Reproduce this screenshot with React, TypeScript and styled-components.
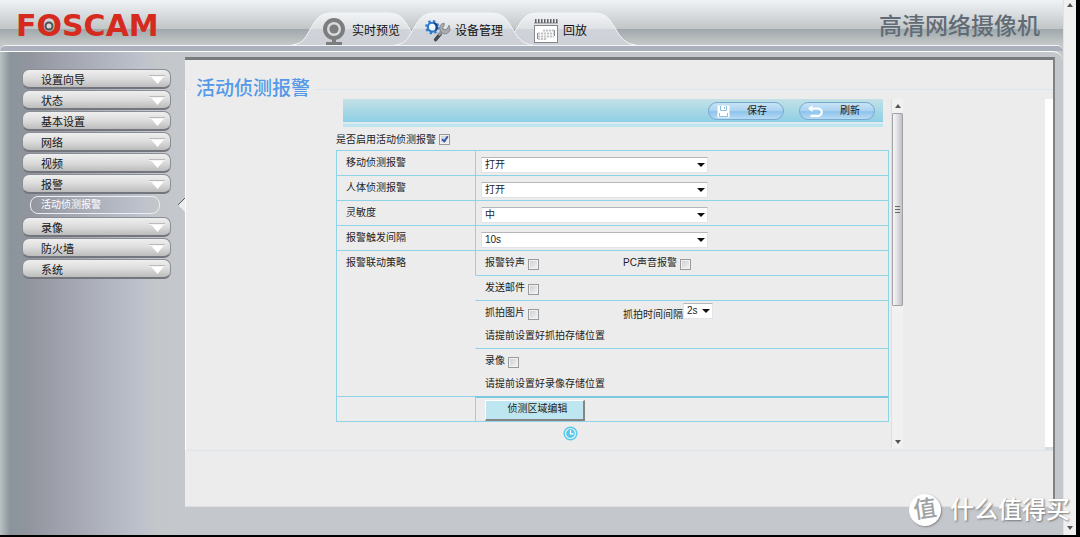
import React from "react";
import styled, { createGlobalStyle, css } from "styled-components";

const GlobalStyle = createGlobalStyle`
  *, *::before, *::after { box-sizing: border-box; }
  body {
    margin: 0;
    background: #000;
    color: #1c1c1c;
    font-family: "Liberation Sans", "Noto Sans CJK SC", sans-serif;
    font-size: 10px;
  }
  button, select, input { font-family: inherit; color: inherit; margin: 0; }
`;

const line = "#8fd3e8";

const Window = styled.div`
  position: relative;
  display: flex;
  min-height: 100vh;
  padding: 0 4px 2px 0;
`;

const Page = styled.div`
  flex: 1;
  min-width: 0;
  display: flex;
  flex-direction: column;
  background: #c5c8c8;
`;

const PageScroll = styled.div`
  width: 13px;
  display: flex;
  flex-direction: column;
  align-items: center;
  justify-content: space-between;
  padding: 3px 0 5px;
  background: #f0f0f0;
  border-left: 1px solid #e2e2e2;
`;

const Header = styled.header`
  height: 45px;
  display: flex;
  background: linear-gradient(#eff3f6 0, #d9dddf 14px, #c1c5c6 29px, #9fa8ac 29px, #c6c9c9 45px);
`;

const Logo = styled.a`
  width: 292px;
  padding-left: 16px;
  font-family: "DejaVu Sans", sans-serif;
  font-size: 30px;
  font-weight: 700;
  line-height: 52px;
  color: #d52b1e;
  text-decoration: none;
`;

const LensLetter = styled.span`
  position: relative;
  svg {
    position: absolute;
    left: 50%;
    top: 50%;
    transform: translate(-50%, -50%);
  }
`;

const Tabs = styled.nav`
  flex: 1;
  display: flex;
  align-items: flex-end;
`;

const Tab = styled.a<{ $front?: boolean; $short?: boolean }>`
  position: relative;
  z-index: ${(p) => (p.$front ? 2 : 1)};
  width: 138px;
  height: 33px;
  margin-right: -35px;
  padding: 4px 0 0 ${(p) => (p.$short ? 35 : 30)}px;
  display: flex;
  align-items: center;
  gap: 4px;
  color: #111;
  font-size: 12px;
  line-height: 16px;
  text-decoration: none;
`;

const TabShape = styled.svg`
  position: absolute;
  inset: 0;
  z-index: -1;
`;

const TabIcon = styled.span`
  display: flex;
  width: 26px;
`;

const Product = styled.div`
  padding-right: 23px;
  font-family: "Liberation Serif", "Noto Sans CJK SC", serif;
  font-size: 23px;
  font-weight: 500;
  line-height: 54px;
  color: #616b75;
`;

const Band = styled.div`
  height: 6px;
  background: #aab0bc;
  border-top: 1px solid #f2f4f6;
  border-radius: 10px 10px 0 0;
`;

const Body = styled.div`
  flex: 1;
  display: flex;
  padding: 5px 8px 28px 0;
  background: linear-gradient(90deg, #b9c2c3 0, #8b949b 10px, #8f959d 24px, #93959f 32px, #a3a6b0 70px, #b4b8c2 115px, #bec2cc 142px, #c3c7ca 156px, #c4c7cc 185px);
  border-top: 1px solid #fff;
  border-radius: 0 10px 0 0;
`;

const Side = styled.aside`
  position: relative;
  width: 185px;
  padding: 12px 14px 0 22px;
`;

const Menu = styled.nav`
  display: flex;
  flex-direction: column;
  gap: 1px;
`;

const MenuItem = styled.button`
  height: 20px;
  display: flex;
  align-items: center;
  justify-content: space-between;
  padding: 2px 4px 0 18px;
  border: 1px solid #8b8d94;
  border-bottom: 2px solid #74767e;
  border-radius: 7px;
  background: linear-gradient(#efefef, #dcdcdc 50%, #bcbcbc);
  font-size: 11px;
  line-height: 16px;
  color: #151515;
`;

const SubItem = styled.a`
  height: 18px;
  margin: 1px 11px 2px 8px;
  padding-left: 10px;
  border: 1px solid #eceef1;
  border-radius: 8px;
  font-size: 10px;
  line-height: 16px;
  color: #fff;
  text-decoration: none;
`;

const Notch = styled.svg`
  position: absolute;
  right: 0;
  top: 141px;
`;

const Panel = styled.main`
  flex: 1;
  min-width: 0;
  background: #ececec;
  border-top: 3px solid #777b7b;
  border-right: 2px solid #808284;
  border-bottom: 1px solid #dcdee0;
  padding-top: 19px;
`;

const Frame = styled.fieldset`
  min-width: 0;
  margin: 0;
  padding: 0;
  border: 1px solid #dde6ec;
  border-left-color: #fff;
  border-right: 0;
`;

const Title = styled.legend`
  margin-left: 5px;
  padding: 0 5px;
  font-family: "Liberation Serif", "Noto Sans CJK SC", serif;
  font-size: 19px;
  font-weight: 500;
  line-height: 20px;
  color: #5399e8;
`;

const FrameBody = styled.div`
  display: flex;
  height: 351px;
`;

const Strip = styled.div`
  width: 8px;
  background: #fff;
  border-bottom: 3px solid #d4dde4;
`;

const Scroller = styled.div`
  flex: 1;
  display: flex;
  justify-content: center;
  padding: 0 0 2px 8px;
`;

const Settings = styled.form`
  width: 553px;
  margin-right: 2px;
`;

const Toolbar = styled.div`
  height: 28px;
  margin: 0 6px 0 7px;
  padding: 3px 8px 0 0;
  display: flex;
  justify-content: flex-end;
  align-items: flex-start;
  gap: 15px;
  background: linear-gradient(#c3e1e6 0, #8ecfe5 23px, #dcebef 23px, #dcebef 25px, #bce5f0 25px);
`;

const Pill = styled.button`
  width: 76px;
  height: 18px;
  display: flex;
  align-items: center;
  gap: 17px;
  padding: 0 0 0 8px;
  border: 1px solid #78a9cf;
  border-radius: 9px;
  background: linear-gradient(#c9e3f5, #a9d2f1 50%, #8dc3ec 54%, #b8dbf3);
  font-size: 10px;
  line-height: 16px;
`;

const Enable = styled.label`
  display: flex;
  align-items: center;
  gap: 3px;
  height: 23px;
  font-size: 10px;
`;

const Check = styled.input.attrs({ type: "checkbox" })`
  appearance: none;
  position: relative;
  width: 11px;
  height: 11px;
  flex: none;
  margin-top: 2px;
  border: 1px solid #989a9c;
  background: linear-gradient(135deg, #c9ccd0, #f6f6f6);
  box-shadow: inset 0 0 0 1px #f2f2f2;
  &:checked::after {
    content: "";
    position: absolute;
    left: 3px;
    top: 0;
    width: 4px;
    height: 7px;
    border: solid #3c5aa5;
    border-width: 0 2px 2px 0;
    transform: rotate(35deg);
  }
`;

const Table = styled.table`
  width: 100%;
  table-layout: fixed;
  border: 1px solid ${line};
  border-top: 0;
  border-spacing: 0;
`;

const Name = styled.th`
  width: 138px;
  height: 25px;
  padding: 4px 0 0 9px;
  border-top: 1px solid ${line};
  text-align: left;
  vertical-align: top;
  font-weight: 400;
  line-height: 16px;
`;

const Cell = styled.td<{ $open?: boolean; $field?: boolean; $strong?: boolean }>`
  height: 25px;
  padding: 0 0 0 ${(p) => (p.$field ? 5 : 9)}px;
  border-top: ${(p) => (p.$strong ? "2px solid #7cc9e0" : `1px solid ${line}`)};
  border-left: 1px solid ${(p) => (p.$open ? "transparent" : line)};
  vertical-align: top;
`;

const Line = styled.div`
  display: flex;
  height: 23px;
`;

const Option = styled.label`
  width: 138px;
  height: 24px;
  display: flex;
  align-items: center;
  gap: 3px;
  line-height: 16px;
`;

const Inline = styled.div`
  display: flex;
  align-items: center;
  height: 24px;
`;

const Note = styled.p`
  margin: 0;
  line-height: 24px;
`;

const Picker = styled.span<{ $small?: boolean }>`
  position: relative;
  display: block;
  width: ${(p) => (p.$small ? 30 : 227)}px;
  ${(p) => (p.$small ? css`margin-bottom: 5px;` : css`margin-top: 6px;`)}
  &::after {
    content: "";
    position: absolute;
    right: 3px;
    top: 6px;
    border: solid transparent;
    border-width: 4px 4px 0;
    border-top-color: #111;
    pointer-events: none;
  }
`;

const Select = styled.select`
  display: block;
  appearance: none;
  width: 100%;
  height: 16px;
  padding: 0 0 0 3px;
  border: 1px solid #e3e4ea;
  border-top-color: #b5b6bb;
  border-radius: 0;
  background: #fff;
  font-size: 10px;
  line-height: 14px;
`;

const RegionButton = styled.button`
  display: block;
  width: 100px;
  height: 21px;
  margin-top: 2px;
  padding: 0 0 3px 6px;
  border: solid;
  border-width: 1px 2px 2px 1px;
  border-color: #fff #858585 #858585 #fff;
  background: #bde6f1;
  font-size: 10px;
  line-height: 16px;
`;

const Status = styled.div`
  display: flex;
  justify-content: center;
  padding: 4px 84px 0 0;
`;

const Track = styled.div`
  width: 12px;
  display: flex;
  flex-direction: column;
  align-items: center;
  background: #f1f1f1;
  border-left: 1px solid #dedede;
  padding: 5px 0 4px;
`;

const Thumb = styled.div`
  width: 11px;
  height: 193px;
  margin: 5px 0 auto;
  display: flex;
  align-items: center;
  justify-content: center;
  border: 1px solid #a2a3a6;
  border-radius: 1px;
  background: linear-gradient(90deg, #f6f6f6, #e2e2e4 45%, #bfc0c4);
`;

const Watermark = styled.div`
  position: absolute;
  right: 10px;
  bottom: 11px;
  display: flex;
  align-items: center;
  gap: 9px;
  color: #fff;
  font-size: 24px;
  font-weight: 500;
  line-height: 32px;
  text-shadow: 1px 1px 2px #777;
  pointer-events: none;
`;

const Seal = styled.span`
  width: 32px;
  height: 32px;
  border-radius: 50%;
  background: #fff;
  box-shadow: 1px 1px 2px #888;
  color: #a1a2a4;
  text-align: center;
  font-size: 23px;
  text-shadow: none;
  line-height: 31px;
`;

const SealGlyph = styled.span`
  display: block;
  transform: rotate(-8deg);
`;

const Arrow = ({ up }: { up?: boolean }) => (
  <svg width="6" height="4" viewBox="0 0 6 4" aria-hidden="true">
    <path d={up ? "M0 4 3 0l3 4z" : "M0 0h6L3 4z"} fill="#555" />
  </svg>
);

const TabBack = ({ id }: { id: string }) => (
  <TabShape width="138" height="33" viewBox="0 0 138 33" aria-hidden="true">
    <defs>
      <linearGradient id={id} x1="0" y1="0" x2="0" y2="1">
        <stop offset="0" stopColor="#f1f3f5" />
        <stop offset=".48" stopColor="#dfe2e5" />
        <stop offset=".52" stopColor="#d0d3d8" />
        <stop offset="1" stopColor="#cdd0d7" />
      </linearGradient>
    </defs>
    <path
      d="M0 33C12 32 14 24 19 16C25 6 28 1 40 1H95C108 1 111 6 117 16C122 24 126 32 138 33Z"
      fill={`url(#${id})`}
    />
    <path
      d="M0 33C12 32 14 24 19 16C25 6 28 1 40 1H95C108 1 111 6 117 16C122 24 126 32 138 33"
      fill="none"
      stroke="#f4f6f8"
    />
  </TabShape>
);

const WebcamIcon = () => (
  <svg width="24" height="28" viewBox="0 0 24 28" aria-hidden="true">
    <circle cx="12" cy="12" r="9" fill="#d9dbdd" stroke="#7c7d7e" strokeWidth="4" />
    <circle cx="12" cy="12" r="4.6" fill="#7c7d7e" />
    <path d="M10 22h4v3h6v3H4v-3h6z" fill="#7c7d7e" />
  </svg>
);

const ToolsIcon = () => (
  <svg width="27" height="24" viewBox="0 0 27 24" aria-hidden="true">
    <path d="m11 21 5-6" stroke="#45484c" strokeWidth="3.6" strokeLinecap="round" />
    <path d="m14 16 6-6" stroke="#94979b" strokeWidth="3.4" />
    <path d="M20 4c-4 0-6 4-4 8 2 4 8 4 10-1l-1-5-2 4-3 1-2-2 2-3z" fill="#a9abaf" stroke="#777a7e" strokeWidth=".8" />
    <circle cx="7.5" cy="8" r="6.2" fill="none" stroke="#2f80cf" strokeWidth="2.4" strokeDasharray="2.4 2.47" />
    <circle cx="7.5" cy="8" r="4.6" fill="#eef5fb" stroke="#2c77c6" strokeWidth="2.2" />
    <path d="M9.5 3.6a4.800 4.800 0 0 1 1.500 7.700" fill="none" stroke="#1b3f80" strokeWidth="2" />
  </svg>
);

const CalendarIcon = () => (
  <svg width="26" height="26" viewBox="0 0 26 26" aria-hidden="true">
    <rect x="1.500" y="7.500" width="23" height="17" fill="#fff" stroke="#85878a" />
    <path d="M1 5h24" stroke="#8b8d90" />
    <path d="M2 3h23" stroke="#606266" strokeWidth="4" strokeDasharray="1.500 1.500" />
    <path d="M10 12.500h11M5 15.500h16M5 18.500h16M5 21h9" stroke="#c3c4c5" strokeWidth="2" strokeDasharray="2.200 .8" />
    <path d="M4.500 15v6M21.500 12v6" stroke="#8e8f90" />
  </svg>
);

const MenuArrow = () => (
  <svg width="18" height="10" viewBox="0 0 18 10" aria-hidden="true">
    <path d="M1 .5h16" stroke="#bbb" />
    <path d="M1 1.500h16" stroke="#f3f3f3" />
    <path d="M3.500 2h12L9.500 9z" fill="#fff" />
  </svg>
);

const SaveIcon = () => (
  <svg width="13" height="13" viewBox="0 0 13 13" aria-hidden="true">
    <path d="M.5.5h12v12H.5z" fill="#fff" />
    <path d="M3.500 1v4.500h6V1M2.500 8v3.500h8V8" fill="none" stroke="#91bfe0" />
    <path d="M7.500 2v2" stroke="#91bfe0" />
  </svg>
);

const UndoIcon = () => (
  <svg width="15" height="13" viewBox="0 0 15 13" aria-hidden="true">
    <path d="M3 3.500h7a3.700 3.700 0 0 1 0 7.400H2.500" fill="none" stroke="#fff" strokeWidth="2.200" />
    <path d="M0 3.500 4.500 0v7z" fill="#fff" />
  </svg>
);

const ClockIcon = () => (
  <svg width="15" height="15" viewBox="0 0 15 15" aria-hidden="true">
    <circle cx="7.500" cy="7.500" r="7" fill="#5bc8ea" />
    <circle cx="7.500" cy="7.500" r="5" fill="none" stroke="#dff3fa" strokeWidth="1.200" />
    <path d="M7.500 4.200v3.600h3.200" fill="none" stroke="#fff" strokeWidth="1.200" />
  </svg>
);

const menu = ["设置向导", "状态", "基本设置", "网络", "视频", "报警", "录像", "防火墙", "系统"];

const fields = [
  { id: "motion", label: "移动侦测报警", value: "打开", options: ["打开", "关闭"] },
  { id: "human", label: "人体侦测报警", value: "打开", options: ["打开", "关闭"] },
  { id: "level", label: "灵敏度", value: "中", options: ["低", "中", "高"] },
  { id: "interval", label: "报警触发间隔", value: "10s", options: ["5s", "10s", "15s"] },
];

export default function App() {
  return (
    <>
      <GlobalStyle />
      <Window>
        <Page>
          <Header>
            <Logo href="#home">
              F
              <LensLetter>
                O
                <svg width="12" height="12" viewBox="0 0 12 12" aria-hidden="true">
                  <circle cx="6" cy="6" r="3.500" fill="#d5d8da" stroke="#4e5256" strokeWidth="2" />
                </svg>
              </LensLetter>
              SCAM
            </Logo>
            <Tabs>
              <Tab href="#live">
                <TabBack id="tab-live" />
                <TabIcon><WebcamIcon /></TabIcon>
                实时预览
              </Tab>
              <Tab href="#device" $front>
                <TabBack id="tab-device" />
                <TabIcon><ToolsIcon /></TabIcon>
                设备管理
              </Tab>
              <Tab href="#playback" $short>
                <TabBack id="tab-playback" />
                <TabIcon><CalendarIcon /></TabIcon>
                回放
              </Tab>
            </Tabs>
            <Product>高清网络摄像机</Product>
          </Header>
          <Band />
          <Body>
            <Side>
              <Menu>
                {menu.map((name) => (
                  <React.Fragment key={name}>
                    <MenuItem type="button">
                      {name}
                      <MenuArrow />
                    </MenuItem>
                    {name === "报警" && <SubItem href="#motion">活动侦测报警</SubItem>}
                  </React.Fragment>
                ))}
              </Menu>
              <Notch width="8" height="14" viewBox="0 0 8 14" aria-hidden="true">
                <path d="M8 0 1 7l7 7z" fill="#ececec" />
                <path d="M8 0 1 7" stroke="#55585b" />
              </Notch>
            </Side>
            <Panel>
              <Frame>
                <Title>活动侦测报警</Title>
                <FrameBody>
                  <Scroller>
                    <Settings>
                      <Toolbar>
                        <Pill type="button">
                          <SaveIcon />
                          保存
                        </Pill>
                        <Pill type="button">
                          <UndoIcon />
                          刷新
                        </Pill>
                      </Toolbar>
                      <Enable>
                        是否启用活动侦测报警
                        <Check defaultChecked />
                      </Enable>
                      <Table>
                        <tbody>
                          {fields.map((f) => (
                            <tr key={f.id}>
                              <Name scope="row">
                                <label htmlFor={f.id}>{f.label}</label>
                              </Name>
                              <Cell $field>
                                <Picker>
                                  <Select id={f.id} defaultValue={f.value}>
                                    {f.options.map((o) => (
                                      <option key={o}>{o}</option>
                                    ))}
                                  </Select>
                                </Picker>
                              </Cell>
                            </tr>
                          ))}
                          <tr>
                            <Name scope="rowgroup" rowSpan={4}>报警联动策略</Name>
                            <Cell>
                              <Line>
                                <Option>报警铃声<Check /></Option>
                                <Option>PC声音报警<Check /></Option>
                              </Line>
                            </Cell>
                          </tr>
                          <tr>
                            <Cell $open>
                              <Option>发送邮件<Check /></Option>
                            </Cell>
                          </tr>
                          <tr>
                            <Cell $open>
                              <Line>
                                <Option>抓拍图片<Check /></Option>
                                <Inline>
                                  <label htmlFor="snap">抓拍时间间隔</label>
                                  <Picker $small>
                                    <Select id="snap" defaultValue="2s">
                                      <option>1s</option>
                                      <option>2s</option>
                                      <option>3s</option>
                                    </Select>
                                  </Picker>
                                </Inline>
                              </Line>
                              <Note>请提前设置好抓拍存储位置</Note>
                            </Cell>
                          </tr>
                          <tr>
                            <Cell $open>
                              <Line>
                                <Option>录像<Check /></Option>
                              </Line>
                              <Note>请提前设置好录像存储位置</Note>
                            </Cell>
                          </tr>
                          <tr>
                            <Name as="td" />
                            <Cell $strong>
                              <RegionButton type="button">侦测区域编辑</RegionButton>
                            </Cell>
                          </tr>
                        </tbody>
                      </Table>
                      <Status>
                        <ClockIcon />
                      </Status>
                    </Settings>
                    <Track aria-hidden="true">
                      <Arrow up />
                      <Thumb>
                        <svg width="5" height="7" viewBox="0 0 5 7">
                          <path d="M0 .5h5M0 3.500h5M0 6.500h5" stroke="#666" />
                        </svg>
                      </Thumb>
                      <Arrow />
                    </Track>
                  </Scroller>
                  <Strip />
                </FrameBody>
              </Frame>
            </Panel>
          </Body>
        </Page>
        <PageScroll aria-hidden="true">
          <Arrow up />
          <Arrow />
        </PageScroll>
        <Watermark>
          <Seal>
            <SealGlyph>值</SealGlyph>
          </Seal>
          什么值得买
        </Watermark>
      </Window>
    </>
  );
}
